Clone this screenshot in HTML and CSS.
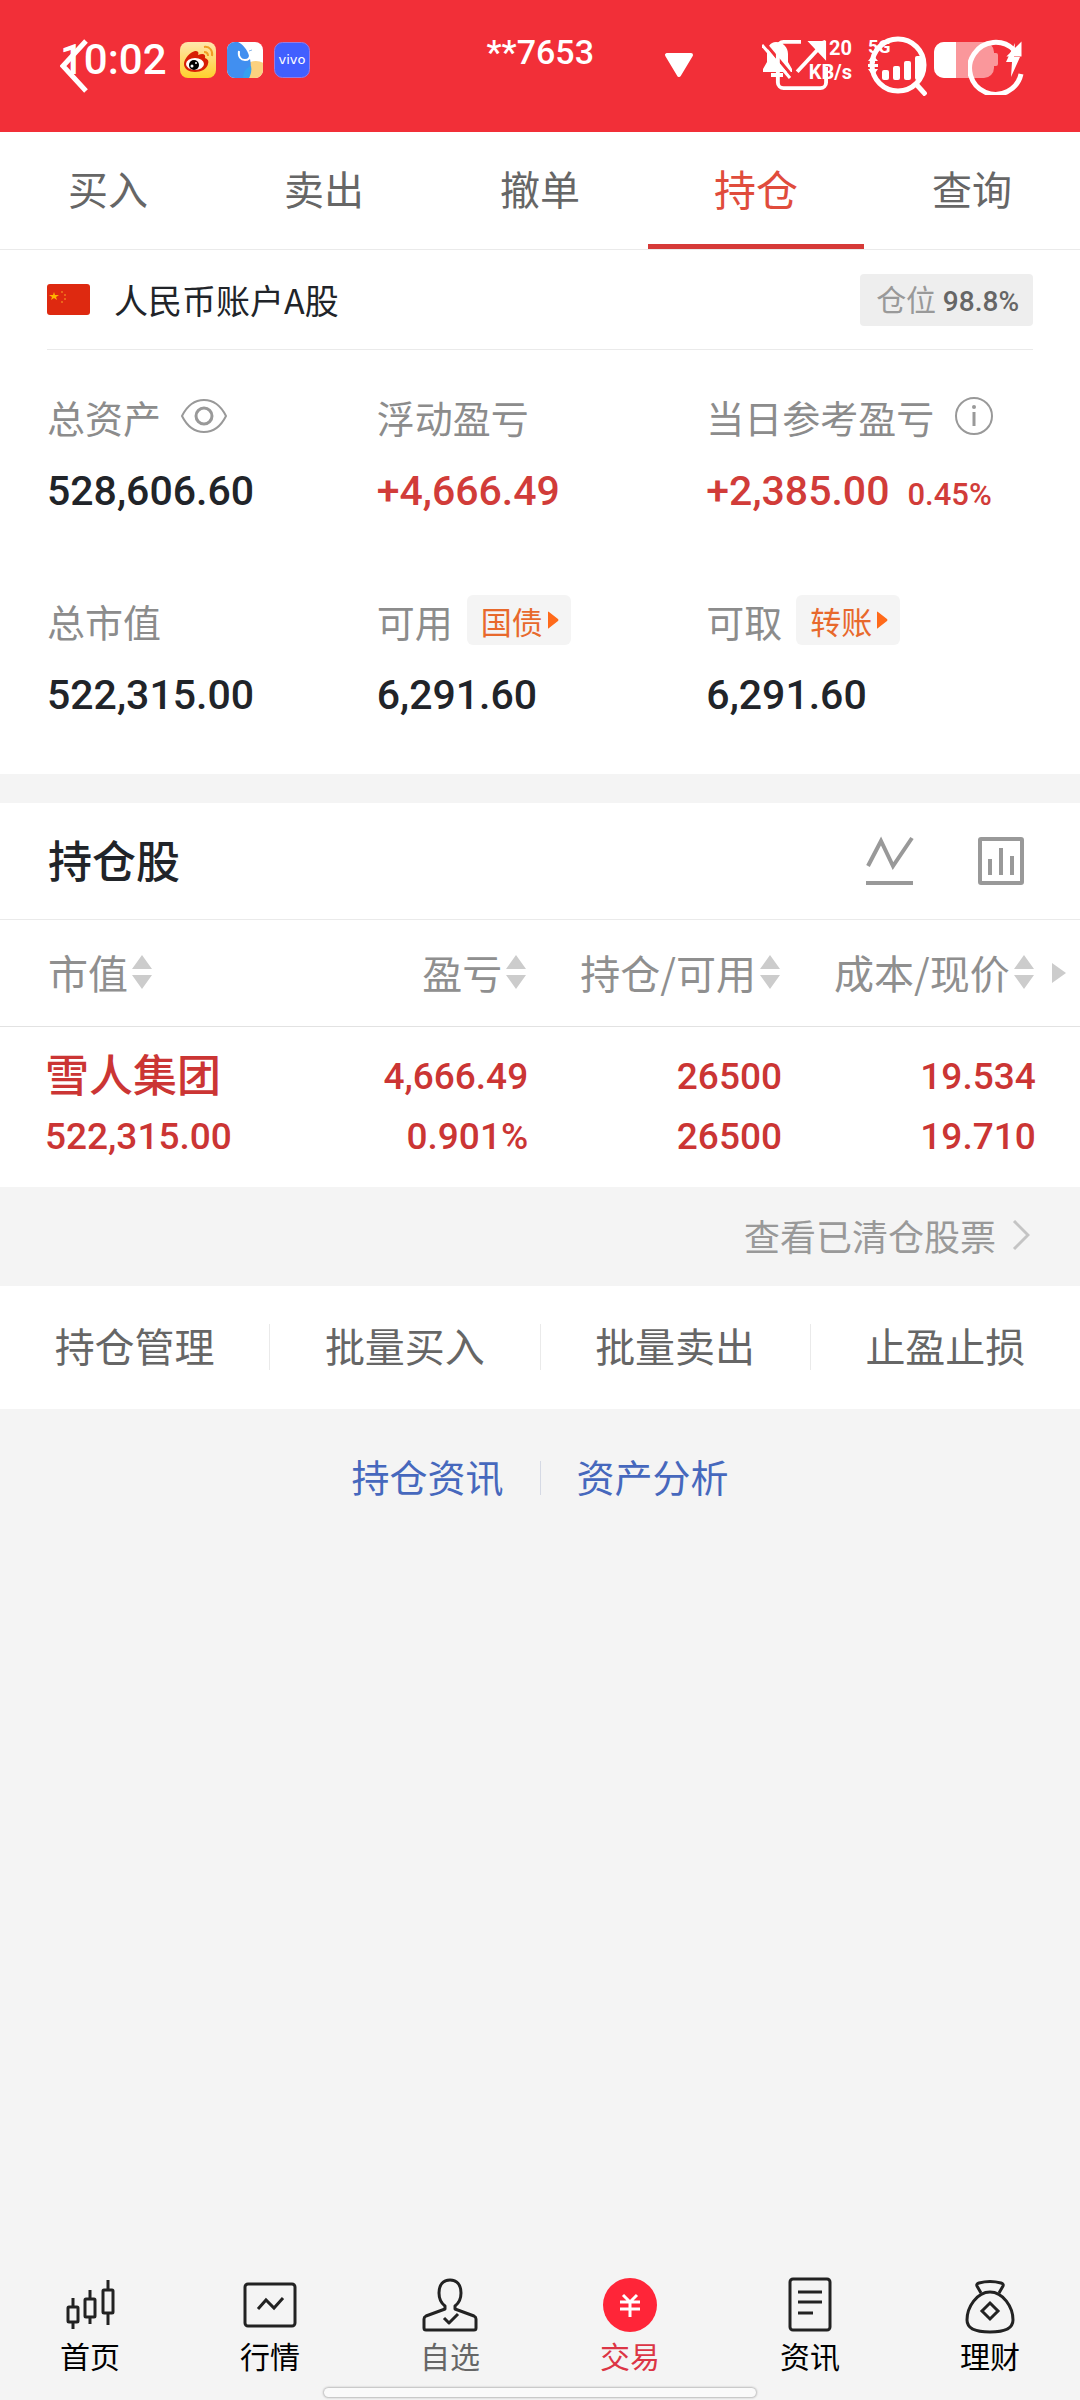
FILE: index.html
```html
<!DOCTYPE html>
<html lang="zh-CN">
<head>
  <meta charset="UTF-8" />
  <meta name="viewport" content="width=device-width, initial-scale=1.0" />
  <title>持仓</title>
  <link rel="stylesheet" href="styles.css">
</head>
<body>

  <!-- 顶部 -->
  <header class="app-bar">
    <a class="back" href="#" aria-label="返回">
      <svg width="28" height="54" viewBox="0 0 28 54" fill="none" stroke="#fff" stroke-width="5"><path d="M26 2 3 27l23 25"/></svg>
    </a>
    <button class="account-btn" type="button">
      <span class="account-no">**7653</span>
      <svg width="30" height="26" viewBox="0 0 30 26"><path d="M3 2h24L15 22z" fill="#fff" stroke="#fff" stroke-width="4" stroke-linejoin="round"/></svg>
    </button>
    <div class="bar-actions">
      <button type="button" aria-label="分享">
        <svg width="54" height="56" viewBox="0 0 56 58" fill="none" stroke="#fff" stroke-width="4"><path d="M28 4H10a6 6 0 0 0-6 6v36a6 6 0 0 0 6 6h38a6 6 0 0 0 6-6V30"/><path d="M24 35 50 7"/><path d="M37 4h16v17z" fill="#fff" stroke-width="2"/></svg>
      </button>
      <button type="button" aria-label="搜索">
        <svg width="58" height="60" viewBox="0 0 58 60" fill="none" stroke="#fff" stroke-width="5"><circle cx="29" cy="29" r="26"/><path d="m47 48 10 11"/></svg>
      </button>
      <button type="button" aria-label="刷新">
        <svg width="56" height="58" viewBox="0 0 56 58" fill="none" stroke="#fff" stroke-width="5"><path d="M46 13a26 26 0 1 0 7 24"/><path d="M52 8v10H42z" fill="#fff" stroke-width="3"/></svg>
      </button>
    </div>

    <!-- 系统状态栏，叠在标题栏上 -->
    <div class="status-bar">
      <span class="time">10:02</span>
      <svg class="app-icon" width="36" height="36" viewBox="0 0 36 36">
        <defs><linearGradient id="wb" x1="0" y1="0" x2="0" y2="1"><stop offset="0" stop-color="#ffe7ae"/><stop offset="1" stop-color="#ffd02c"/></linearGradient></defs>
        <rect width="36" height="36" rx="8" fill="url(#wb)"/>
        <path d="M4 22c0-5 6-12 11-13 3 0 4 1 3 4 5-2 8-1 7 3 3 1 4 3 3 6-1 5-7 8-13 8S4 27 4 22z" fill="#d81e06"/>
        <ellipse cx="15" cy="22" rx="9" ry="6" fill="#fff"/>
        <circle cx="14" cy="23" r="5" fill="#000"/><circle cx="12" cy="24" r="1.500" fill="#fff"/><circle cx="16" cy="21" r="1" fill="#fff"/>
        <path d="M24 5c6-1 9 4 8 9M24 10c3 0 4 1 4 4" fill="none" stroke="#f19d24" stroke-width="2"/>
      </svg>
      <svg class="app-icon" width="36" height="36" viewBox="0 0 36 36">
        <clipPath id="rc"><rect width="36" height="36" rx="8"/></clipPath>
        <g clip-path="url(#rc)">
          <rect width="36" height="36" fill="#fff"/>
          <circle cx="29" cy="34" r="15" fill="#fbd17f"/>
          <path d="M0 0h11c10 5 16 20 11 36H0z" fill="#418ff0"/>
          <path d="M16 36c0-6 3-10 8-12 1 4 0 8-2 12z" fill="#36a0ef"/>
          <path d="M12 9c-1 6 2 9 6 9 3 0 5-2 5-5" fill="none" stroke="#fff" stroke-width="2"/>
          <path d="M22 9l3-1" stroke="#8cb8ea" stroke-width="1"/>
        </g>
      </svg>
      <svg class="app-icon" width="36" height="36" viewBox="0 0 36 36">
        <rect x="0.500" y="0.500" width="35" height="35" rx="8" fill="#415fff" stroke="#9a7be0"/>
        <text x="18" y="22" text-anchor="middle" font-family="DejaVu Sans" font-size="13" fill="#fff">vivo</text>
      </svg>
      <div class="status-right">
        <svg width="32" height="38" viewBox="0 0 32 38">
          <path d="M14 1c7 0 12 5 12 12v8l4 7v3H1v-3l4-7v-8C5 6 8 1 14 1z" fill="#fff"/>
          <path d="M9 34h12" stroke="#fff" stroke-width="4"/>
          <path d="M2 1l29 35" stroke="#f22f38" stroke-width="3"/>
          <path d="M0 4l28 33" stroke="#fff" stroke-width="3"/>
        </svg>
        <div class="net-speed">
          <span>120</span>
          <span>KB/s</span>
        </div>
        <div class="signal">
          <span>5G</span>
          <svg width="54" height="26" viewBox="0 0 54 26" fill="#fff"><path d="M0 6 5 0l5 6H7v2H3V6zM0 14h10l-5 7zM0 9h10v3H0z"/><rect x="14" y="15" width="7" height="10" rx="2"/><rect x="25" y="11" width="7" height="14" rx="2"/><rect x="36" y="6" width="7" height="19" rx="2"/><rect x="47" y="1" width="7" height="24" rx="2"/></svg>
        </div>
        <svg width="90" height="38" viewBox="0 0 90 38">
          <path d="M10 1h40a10 10 0 0 1 10 10v1h2a2 2 0 0 1 2 2v9a2 2 0 0 1-2 2h-2v2a10 10 0 0 1-10 10H10A10 10 0 0 1 0 27V11A10 10 0 0 1 10 1z" fill="#fa979b"/>
          <path d="M22 1H10A10 10 0 0 0 0 11v16a10 10 0 0 0 10 10h12z" fill="#fff"/>
          <path d="m81 2-9 19h6l-1 15 9-20h-6z" fill="#fff"/>
        </svg>
      </div>
    </div>
  </header>

  <nav class="tabs">
    <a href="#">买入</a>
    <a href="#">卖出</a>
    <a href="#">撤单</a>
    <a href="#" class="active">持仓</a>
    <a href="#">查询</a>
  </nav>

  <!-- 账户资产 -->
  <section class="assets">
    <div class="account">
      <svg width="43" height="31" viewBox="0 0 43 31">
        <rect width="43" height="31" rx="3" fill="#de2910"/>
        <path d="M7 8l1 3h4l-3 2 1 3-3-2-3 2 1-3-3-2h4z" fill="#ffb400"/>
        <g fill="#f07a1c"><circle cx="15" cy="8" r="1"/><circle cx="18" cy="11" r="1"/><circle cx="18" cy="15" r="1"/><circle cx="15" cy="18" r="1"/></g>
      </svg>
      <span class="account-name">人民币账户A股</span>
      <span class="position">仓位 <b>98.8%</b></span>
    </div>

    <div class="asset-grid">
      <div class="asset">
        <div class="label">总资产
          <button type="button" class="icon-btn" aria-label="隐藏金额"><svg width="46" height="36" viewBox="0 0 46 36" fill="none" stroke="#999" stroke-width="2"><path d="M1 18C6 8 14 2 23 2s17 6 22 16c-5 10-13 16-22 16S6 28 1 18z"/><circle cx="23" cy="18" r="8" stroke-width="3"/></svg></button>
        </div>
        <div class="value">528,606.60</div>
      </div>
      <div class="asset">
        <div class="label">浮动盈亏</div>
        <div class="value up">+4,666.49</div>
      </div>
      <div class="asset">
        <div class="label">当日参考盈亏
          <button type="button" class="icon-btn" aria-label="说明"><svg width="40" height="40" viewBox="0 0 40 40" fill="none" stroke="#999" stroke-width="2"><circle cx="20" cy="20" r="18"/><path d="M20 16v14" stroke-width="3"/><circle cx="20" cy="11" r="2" fill="#999" stroke="none"/></svg></button>
        </div>
        <div class="value up">+2,385.00<small>0.45%</small></div>
      </div>
      <div class="asset">
        <div class="label">总市值</div>
        <div class="value">522,315.00</div>
      </div>
      <div class="asset">
        <div class="label">可用
          <button type="button" class="tag">国债<svg width="11" height="18" viewBox="0 0 11 18"><path d="M0 1q0-1 1 0l9 7q1 1 0 2l-9 7q-1 1-1 0z" fill="#ff6a1a"/></svg></button>
        </div>
        <div class="value">6,291.60</div>
      </div>
      <div class="asset">
        <div class="label">可取
          <button type="button" class="tag">转账<svg width="11" height="18" viewBox="0 0 11 18"><path d="M0 1q0-1 1 0l9 7q1 1 0 2l-9 7q-1 1-1 0z" fill="#ff6a1a"/></svg></button>
        </div>
        <div class="value">6,291.60</div>
      </div>
    </div>
  </section>

  <!-- 持仓股 -->
  <section class="holdings">
    <div class="holdings-head">
      <h2>持仓股</h2>
      <button type="button" aria-label="走势"><svg width="48" height="50" viewBox="0 0 48 50" fill="none" stroke="#999" stroke-width="4"><path d="M2 30 15 5l12 25L46 2"/><path d="M0 47h47"/></svg></button>
      <button type="button" aria-label="统计"><svg width="48" height="50" viewBox="0 0 48 50" fill="none" stroke="#999" stroke-width="4"><rect x="3" y="3" width="42" height="44" rx="1"/><path d="M13 23v16M24 12v27M35 20v19"/></svg></button>
    </div>

    <table>
      <thead>
        <tr>
          <th class="col-name">市值<svg class="sort" width="20" height="34" viewBox="0 0 20 34"><path d="M10 0l10 14H0zM10 34 0 20h20z"/></svg></th>
          <th class="col-profit">盈亏<svg class="sort" width="20" height="34" viewBox="0 0 20 34"><path d="M10 0l10 14H0zM10 34 0 20h20z"/></svg></th>
          <th class="col-amount">持仓/可用<svg class="sort" width="20" height="34" viewBox="0 0 20 34"><path d="M10 0l10 14H0zM10 34 0 20h20z"/></svg></th>
          <th class="col-price">成本/现价<svg class="sort" width="20" height="34" viewBox="0 0 20 34"><path d="M10 0l10 14H0zM10 34 0 20h20z"/></svg></th>
          <th class="col-more"><svg class="more" width="14" height="20" viewBox="0 0 14 20"><path d="M0 0l14 10L0 20z"/></svg></th>
        </tr>
      </thead>
      <tbody>
        <tr>
          <td><span class="stock">雪人集团</span><span>522,315.00</span></td>
          <td><span>4,666.49</span><span>0.901%</span></td>
          <td><span>26500</span><span>26500</span></td>
          <td><span>19.534</span><span>19.710</span></td>
          <td></td>
        </tr>
      </tbody>
    </table>
  </section>

  <a class="cleared" href="#">查看已清仓股票
    <svg width="18" height="30" viewBox="0 0 18 30" fill="none" stroke="#c4c4c4" stroke-width="3"><path d="m2 1 14 14L2 29"/></svg>
  </a>

  <div class="quick">
    <a href="#">持仓管理</a>
    <a href="#">批量买入</a>
    <a href="#">批量卖出</a>
    <a href="#">止盈止损</a>
  </div>

  <div class="links">
    <a href="#">持仓资讯</a>
    <a href="#">资产分析</a>
  </div>

  <!-- 底部导航 -->
  <footer>
    <nav class="bottom-nav">
      <a href="#">
        <svg width="60" height="60" viewBox="0 0 60 60" fill="none" stroke="#222" stroke-width="3"><rect x="8" y="32" width="10" height="15" rx="1"/><path d="M13 23v9M13 47v7"/><rect x="25" y="24" width="10" height="18" rx="1"/><path d="M30 15v9M30 42v7"/><rect x="43" y="15" width="10" height="23" rx="1"/><path d="M48 5v10M48 38v12"/></svg>
        首页
      </a>
      <a href="#">
        <svg width="60" height="60" viewBox="0 0 60 60" fill="none" stroke="#222" stroke-width="3"><rect x="5" y="9" width="50" height="42" rx="3"/><path d="M18 34l8-9 8 8 9-10"/></svg>
        行情
      </a>
      <a href="#" class="dim">
        <svg width="60" height="60" viewBox="0 0 60 60" fill="none" stroke="#222" stroke-width="3" stroke-linejoin="round"><path d="M25 34v-3c-4-3-6-7-6-13 0-8 4-13 11-13s11 5 11 13c0 6-2 10-6 13v3l19 7q2 1 2 3v9q0 2-2 2H6q-2 0-2-2v-9q0-2 2-3z"/><path d="M24 43l5 5 9-9"/></svg>
        自选
      </a>
      <a href="#" class="active">
        <svg width="60" height="60" viewBox="0 0 60 60"><circle cx="30" cy="30" r="27" fill="#ff2538"/><path d="M23 20l7 7 7-7M20 27h20M20 34h20M30 26v16" fill="none" stroke="#fff" stroke-width="3"/></svg>
        交易
      </a>
      <a href="#">
        <svg width="60" height="60" viewBox="0 0 60 60" fill="none" stroke="#222" stroke-width="3"><rect x="10" y="4" width="40" height="51" rx="3"/><path d="M18 17h24M18 27h24M18 38h15"/></svg>
        资讯
      </a>
      <a href="#">
        <svg width="60" height="60" viewBox="0 0 60 60" fill="none" stroke="#222" stroke-width="3"><path d="M21 18l-4-7q-1-2 2-3 11-3 22 0 3 1 2 3l-4 7"/><path d="M30 17c-13 0-23 15-23 28 0 8 8 12 23 12s23-4 23-12c0-13-10-28-23-28z"/><path d="M30 28l8 8-8 8-8-8z"/></svg>
        理财
      </a>
    </nav>
    <div class="home-bar"></div>
  </footer>

</body>
</html>
```

FILE: styles.css
```css
* {
  box-sizing: border-box;
}

body {
  margin: 0;
  min-height: 100vh;
  display: flex;
  flex-direction: column;
  background: #f4f4f4;
  color: #212429;
  font-family: "Noto Sans CJK SC", sans-serif;
}

a {
  color: inherit;
  text-decoration: none;
}

button {
  padding: 0;
  border: 0;
  background: none;
  color: inherit;
  font: inherit;
}

svg {
  display: block;
  flex: none;
}

/* 标题栏 */
.app-bar {
  position: relative;
  display: flex;
  align-items: center;
  height: 132px;
  padding: 0 56px 0 60px;
  background: #f22f38;
  color: #fff;
}

.account-btn {
  display: flex;
  align-items: center;
  gap: 70px;
  margin-left: auto;
  margin-right: 80px;
}

.account-no {
  padding-bottom: 28px;
  font: 500 34px/34px Roboto, sans-serif;
}

.bar-actions {
  position: relative;
  z-index: 1;
  display: flex;
  align-items: center;
  gap: 41px;
}

.status-bar {
  position: absolute;
  top: 36px;
  left: 60px;
  right: 56px;
  height: 48px;
  display: flex;
  align-items: center;
  pointer-events: none;
}

.time {
  width: 120px;
  font: 500 42px/48px Roboto, sans-serif;
}

.app-icon {
  margin-right: 11px;
}

.status-right {
  display: flex;
  align-items: center;
  margin-left: auto;
}

.net-speed {
  width: 58px;
  margin-right: 16px;
  font: 700 20px/24px Roboto, sans-serif;
  text-align: right;
}

.net-speed span {
  display: block;
}

.signal {
  margin-right: 12px;
  font: 700 18px/16px Roboto, sans-serif;
}

.signal span {
  display: block;
}

/* 标签 */
.tabs {
  display: flex;
  height: 118px;
  background: #fff;
  border-bottom: 1px solid #eaeaea;
}

.tabs a {
  flex: 1;
  border-bottom: 5px solid transparent;
  color: #666;
  font-size: 40px;
  line-height: 112px;
  text-align: center;
}

.tabs .active {
  border-color: #d63a38;
  color: #e04c3c;
  font-size: 42px;
}

/* 资产 */
.assets {
  padding: 0 47px 54px;
  margin-bottom: 29px;
  background: #fff;
}

.account {
  display: flex;
  align-items: center;
  height: 100px;
  border-bottom: 1px solid #eaeaea;
}

.account-name {
  margin-left: 24px;
  font-size: 34px;
}

.position {
  margin-left: auto;
  padding: 0 14px 0 16px;
  border-radius: 4px;
  background: #eee;
  color: #999;
  font-size: 30px;
  line-height: 48px;
}

.position b {
  color: #666;
  font: 500 28px/48px Roboto, sans-serif;
}

.asset-grid {
  display: grid;
  grid-template-columns: repeat(3, 1fr);
  gap: 76px 3px;
  padding-top: 42px;
}

.label {
  display: flex;
  align-items: center;
  gap: 14px;
  height: 50px;
  padding-bottom: 2px;
  color: #8c8c8c;
  font-size: 38px;
  white-space: nowrap;
}

.icon-btn {
  margin-left: 6px;
}

.value {
  margin-top: 24px;
  font: 500 41px/50px Roboto, sans-serif;
  white-space: nowrap;
}

.value small {
  margin-left: 18px;
  font-size: 31px;
}

.up {
  color: #d13c39;
}

.tag {
  display: flex;
  align-items: center;
  gap: 5px;
  height: 50px;
  padding: 0 12px 0 14px;
  border-radius: 6px;
  background: #f4f4f4;
  color: #e8692c;
  font-size: 31px;
}

/* 持仓股 */
.holdings {
  background: #fff;
}

.holdings-head {
  display: flex;
  align-items: center;
  gap: 63px;
  height: 117px;
  padding: 0 55px 0 48px;
  border-bottom: 1px solid #eaeaea;
}

.holdings-head h2 {
  margin: 0 auto 0 0;
  padding-bottom: 4px;
  font-size: 44px;
  font-weight: 500;
}

table {
  width: 100%;
  border-collapse: collapse;
  table-layout: fixed;
}

th {
  height: 106px;
  padding: 0 3px 2px 0;
  border-bottom: 1px solid #e2e2e2;
  color: #8f8f8f;
  font-size: 40px;
  font-weight: 400;
  text-align: right;
  white-space: nowrap;
}

.col-name {
  width: 24%;
  padding-left: 48px;
  text-align: left;
}

.col-profit {
  width: 25%;
}

.col-amount,
.col-price {
  width: 23.500%;
}

.sort,
.more {
  display: inline-block;
  margin-left: 4px;
  fill: #ccc;
}

.more {
  margin: 0 11px 6px 0;
}

td {
  padding: 20px 1px 20px 0;
  color: #cb3534;
  font: 500 37px/60px Roboto, sans-serif;
  text-align: right;
}

td:first-child {
  padding-left: 45px;
  text-align: left;
}

td span {
  display: block;
}

.stock {
  padding-bottom: 8px;
  font: 500 44px/52px "Noto Sans CJK SC", sans-serif;
}

.cleared {
  display: flex;
  align-items: center;
  justify-content: flex-end;
  gap: 16px;
  height: 99px;
  padding: 0 50px 2px 0;
  color: #999;
  font-size: 36px;
}

.quick {
  display: flex;
  align-items: center;
  height: 123px;
  background: #fff;
}

.quick a {
  flex: 1;
  padding-bottom: 4px;
  color: #666;
  font-size: 40px;
  line-height: 42px;
  text-align: center;
}

.quick a + a {
  border-left: 1px solid #eaeaea;
}

.links {
  display: flex;
  justify-content: center;
  margin-top: 52px;
}

.links a {
  padding: 0 36px 4px;
  color: #4668bd;
  font-size: 38px;
  line-height: 30px;
}

.links a + a {
  border-left: 1px solid #d5d9e4;
}

/* 底部导航 */
footer {
  margin-top: auto;
}

.bottom-nav {
  display: flex;
}

.bottom-nav a {
  flex: 1;
  display: flex;
  flex-direction: column;
  align-items: center;
  gap: 4px;
  color: #000;
  font-size: 30px;
  line-height: 32px;
}

.bottom-nav .dim {
  color: #666;
}

.bottom-nav .active {
  color: #dc3545;
}

.home-bar {
  width: 40%;
  height: 9px;
  margin: 17px auto 3px;
  border-radius: 5px;
  background: #fafafa;
  box-shadow: 0 0 2px 1px #bbb;
}
```
